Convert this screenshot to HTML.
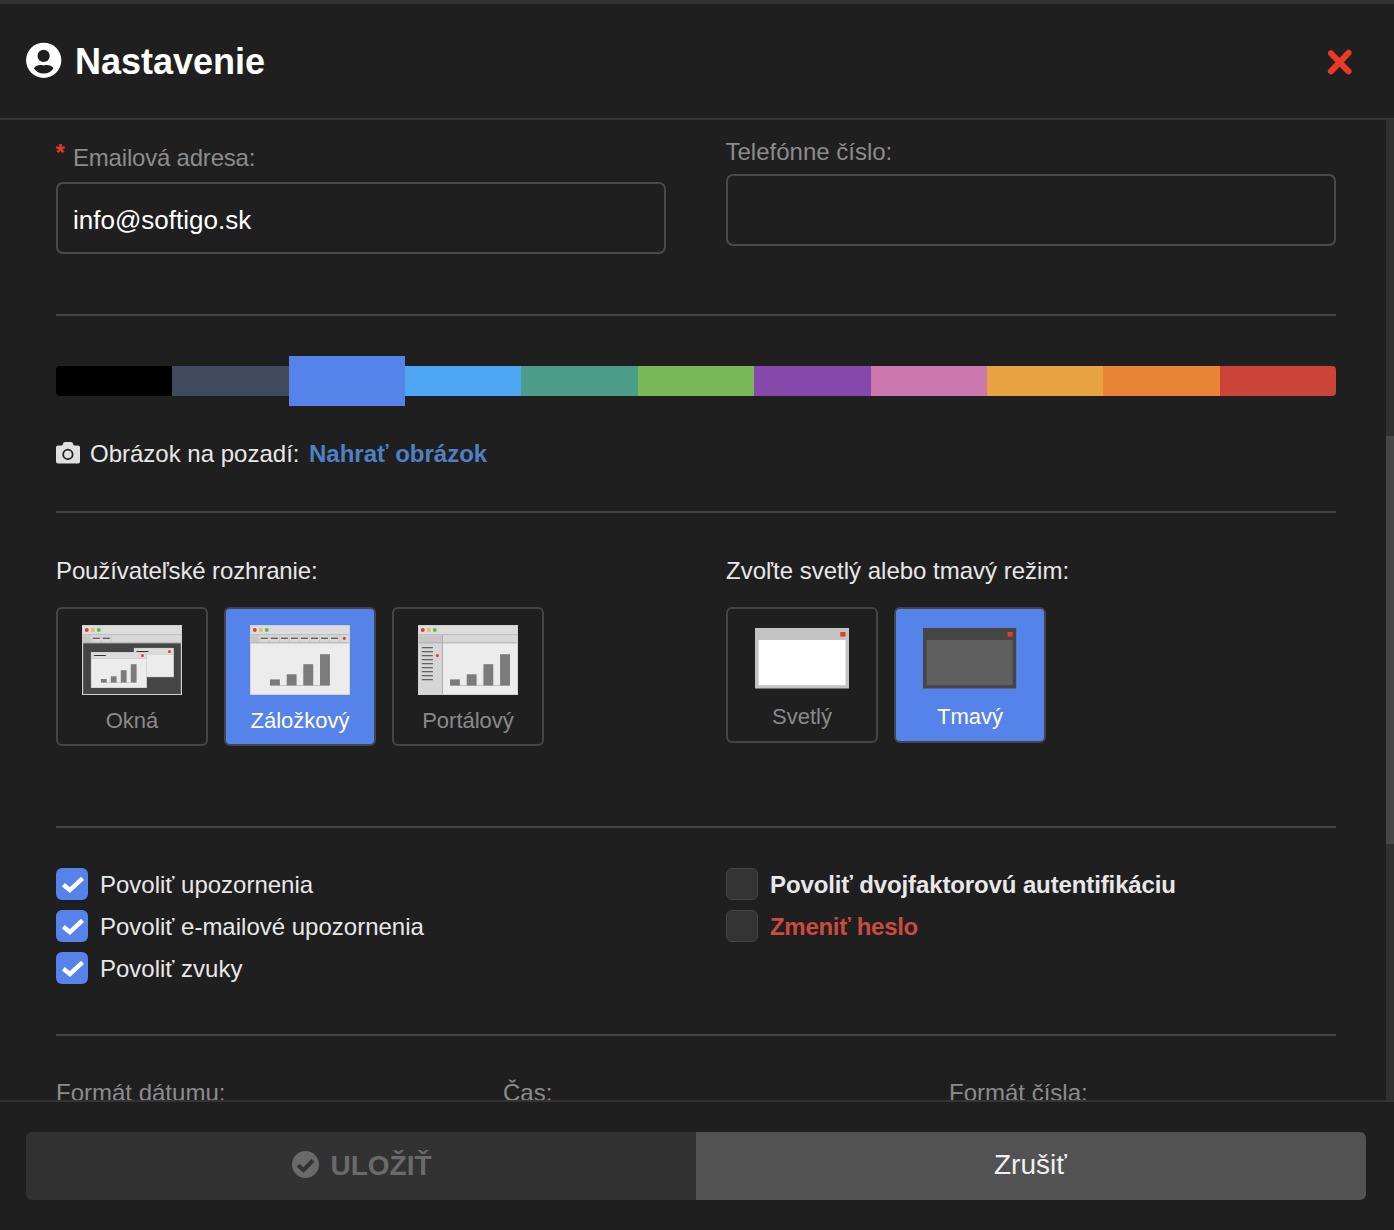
<!DOCTYPE html>
<html><head><meta charset="utf-8">
<style>
html,body{margin:0;padding:0;width:1394px;height:1230px;overflow:hidden;background:#1f1f1f;}
body{position:relative;font-family:"Liberation Sans",sans-serif;color:#e8e8e8;}
.a{position:absolute;}
.t{position:absolute;white-space:nowrap;line-height:1;}
.sep{position:absolute;left:56px;width:1280px;height:2px;background:#444;}
.inp{position:absolute;box-sizing:border-box;width:610px;height:72px;border:2px solid #4a4a4a;border-radius:7px;background:#1f1f1f;}
.tile{position:absolute;box-sizing:border-box;width:152px;border:2px solid #454545;border-radius:6px;background:#1f1f1f;}
.tile.sel{background:#5683e9;border-color:#42454c;}
.tl{position:absolute;left:0;width:148px;text-align:center;font-size:22px;line-height:22px;color:#8a8a8a;margin-top:-1px;}
.sel .tl{color:#fff;}
.cb{position:absolute;box-sizing:border-box;width:32px;height:32px;border-radius:6px;background:#5683e9;}
.cb.off{background:#333;border:1px solid #454545;}
.cbl{position:absolute;white-space:nowrap;font-size:24px;line-height:24px;color:#e8e8e8;}
</style></head><body>
<!-- top strip -->
<div class="a" style="left:0;top:0;width:1394px;height:4px;background:#323232"></div>
<!-- header -->
<svg class="a" style="left:25.7px;top:42px" width="36" height="36" viewBox="0 0 36 36">
<circle cx="17.7" cy="18.3" r="17.6" fill="#fff"/>
<circle cx="17.6" cy="13.9" r="6.1" fill="#1f1f1f"/>
<path d="M7.9 26.2 C10 23.4 13.6 22.4 17.6 23.6 C21.8 22.4 25.4 23.4 27.5 26.2 C25.5 29.8 21.8 31.5 17.7 31.5 C13.6 31.5 9.9 29.8 7.9 26.2 Z" fill="#1f1f1f"/>
</svg>
<div class="t" style="left:75px;top:43.5px;font-size:36px;font-weight:bold;color:#fff">Nastavenie</div>
<svg class="a" style="left:1324px;top:46px" width="32" height="32" viewBox="0 0 32 32">
<path d="M7 7.3 L24.5 25.3 M24.5 6.8 L7 25.3" stroke="#ea3926" stroke-width="6.1" stroke-linecap="round"/>
</svg>
<div class="a" style="left:0;top:118px;width:1394px;height:2px;background:#363636"></div>

<!-- scrollbar -->
<div class="a" style="left:1386px;top:120px;width:8px;height:980px;background:#303030"></div>
<div class="a" style="left:1386px;top:436px;width:8px;height:408px;background:#474747"></div>

<!-- email / phone -->
<div class="t" style="left:55.5px;top:140.5px;font-size:24px;font-weight:bold;color:#e8392a">*</div>
<div class="t" style="left:73px;top:145.7px;font-size:24px;letter-spacing:-0.2px;color:#8c8c8c">Emailová adresa:</div>
<div class="inp" style="left:56px;top:182px"></div>
<div class="t" style="left:73px;top:207px;font-size:26px;color:#fff">info@softigo.sk</div>
<div class="t" style="left:725.5px;top:139.7px;font-size:24px;color:#8c8c8c">Telefónne číslo:</div>
<div class="inp" style="left:726px;top:174px"></div>

<div class="sep" style="top:314px"></div>

<!-- colour bar -->
<div class="a" style="left:56px;top:366px;width:1280px;height:30px;border-radius:4px;overflow:hidden;display:flex">
<div style="flex:1;background:#000"></div>
<div style="flex:1;background:#414a5d"></div>
<div style="flex:1;background:#5683e9"></div>
<div style="flex:1;background:#4ea6f5"></div>
<div style="flex:1;background:#4b9d89"></div>
<div style="flex:1;background:#79b957"></div>
<div style="flex:1;background:#8548ab"></div>
<div style="flex:1;background:#cc77ad"></div>
<div style="flex:1;background:#e8a23f"></div>
<div style="flex:1;background:#e78534"></div>
<div style="flex:1;background:#cc4338"></div>
</div>
<div class="a" style="left:288.7px;top:356px;width:116.4px;height:50px;background:#5683e9"></div>

<!-- background image -->
<svg class="a" style="left:55px;top:441px" width="26" height="24" viewBox="0 0 26 24">
<path d="M6.5 4.4 Q8 4.4 8 2.8 Q8 1.1 10 1.1 H16 Q18 1.1 18 2.8 Q18 4.4 19.5 4.4 H23 Q25 4.4 25 6.4 V20.6 Q25 22.6 23 22.6 H3 Q1 22.6 1 20.6 V6.4 Q1 4.4 3 4.4 Z" fill="#e0e0e0"/>
<circle cx="12.9" cy="13.4" r="4.7" fill="none" stroke="#1f1f1f" stroke-width="1.8"/>
</svg>
<div class="t" style="left:90px;top:441.7px;font-size:24px;color:#e8e8e8">Obrázok na pozadí:</div>
<div class="t" style="left:309px;top:441.7px;font-size:24px;font-weight:bold;color:#5080c4">Nahrať obrázok</div>

<div class="sep" style="top:511px"></div>

<!-- UI -->
<div class="t" style="left:56px;top:558.7px;font-size:24px;letter-spacing:-0.12px;color:#e8e8e8">Používateľské rozhranie:</div>
<div class="t" style="left:726px;top:558.7px;font-size:24px;color:#e8e8e8">Zvoľte svetlý alebo tmavý režim:</div>

<div class="tile" style="left:56px;top:607px;height:139px">
<div class="tl" style="top:102px">Okná</div>
</div>
<div class="tile sel" style="left:224px;top:607px;height:139px">
<div class="tl" style="top:102px">Záložkový</div>
</div>
<div class="tile" style="left:392px;top:607px;height:139px">
<div class="tl" style="top:102px">Portálový</div>
</div>
<div class="tile" style="left:726px;top:607px;height:136px">
<div class="tl" style="top:98px">Svetlý</div>
</div>
<div class="tile sel" style="left:894px;top:607px;height:136px">
<div class="tl" style="top:98px">Tmavý</div>
</div>

<!-- ICONS -->
<svg class="a" style="left:82px;top:625px" width="100" height="70" viewBox="0 0 100 70"><rect x="0" y="0" width="100" height="70" fill="#cfcfcf"/><rect x="0.8" y="0.8" width="98.4" height="8.6" fill="#dcdcdc"/><rect x="0.8" y="9.4" width="98.4" height="0.8" fill="#b0b0b0"/><circle cx="4.8" cy="5" r="2" fill="#d9452e"/><circle cx="10.8" cy="5" r="2" fill="#efb45c"/><circle cx="16.8" cy="5" r="2" fill="#5cb85c"/><rect x="0.8" y="10.2" width="98.4" height="7.4" fill="#d8d8d8"/><rect x="0.8" y="10.2" width="7.6" height="7.4" fill="#c6c6c6"/><rect x="8.8" y="10.2" width="0.6" height="7.4" fill="#bdbdbd"/><rect x="10.8" y="12.7" width="7" height="1" fill="#333333"/><rect x="18.8" y="10.2" width="0.6" height="7.4" fill="#bdbdbd"/><rect x="20.8" y="12.7" width="7" height="1" fill="#333333"/><rect x="28.8" y="10.2" width="0.6" height="7.4" fill="#bdbdbd"/><rect x="0.8" y="17.6" width="98.4" height="0.8" fill="#9a9a9a"/><rect x="1.2" y="18.4" width="97.6" height="50.6" fill="#454545"/><rect x="51.8" y="22.9" width="40.1" height="29.3" fill="#c9c9c9"/><rect x="52.4" y="23.5" width="38.9" height="5.6" fill="#dcdcdc"/><rect x="54.5" y="26" width="12" height="1" fill="#333333"/><circle cx="87.5" cy="26.5" r="1.5" fill="#d9452e"/><rect x="52.4" y="29.7" width="38.9" height="21.9" fill="#ececec"/><rect x="8.9" y="27" width="56" height="36" fill="#c9c9c9"/><rect x="9.5" y="27.6" width="54.8" height="5.6" fill="#dcdcdc"/><rect x="11.8" y="30" width="12" height="1" fill="#333333"/><circle cx="60.5" cy="30.5" r="1.5" fill="#d9452e"/><rect x="9.5" y="33.8" width="54.8" height="28.6" fill="#ececec"/><rect x="18.9" y="54.0" width="5.8" height="3.6" fill="#7b7b7b"/><rect x="28.8" y="51.3" width="5.8" height="6.3" fill="#7b7b7b"/><rect x="38.8" y="45.2" width="5.8" height="12.4" fill="#7b7b7b"/><rect x="48.8" y="39.2" width="5.8" height="18.4" fill="#7b7b7b"/><rect x="18.9" y="57.3" width="35.8" height="0.4" fill="#9a9a9a"/></svg>
<svg class="a" style="left:250px;top:625px" width="100" height="70" viewBox="0 0 100 70"><rect x="0" y="0" width="100" height="70" fill="#cfcfcf"/><rect x="0.8" y="0.8" width="98.4" height="8.6" fill="#dcdcdc"/><rect x="0.8" y="9.4" width="98.4" height="0.8" fill="#b0b0b0"/><circle cx="4.8" cy="5" r="2" fill="#d9452e"/><circle cx="10.8" cy="5" r="2" fill="#efb45c"/><circle cx="16.8" cy="5" r="2" fill="#5cb85c"/><rect x="0.8" y="10.2" width="98.4" height="7.4" fill="#d8d8d8"/><rect x="0.8" y="10.2" width="7.6" height="7.4" fill="#c6c6c6"/><rect x="8.8" y="10.2" width="0.6" height="7.4" fill="#bdbdbd"/><rect x="10.8" y="12.7" width="7" height="1" fill="#333333"/><rect x="18.8" y="10.2" width="0.6" height="7.4" fill="#bdbdbd"/><rect x="20.8" y="12.7" width="7" height="1" fill="#333333"/><rect x="28.9" y="10.2" width="0.6" height="7.4" fill="#bdbdbd"/><rect x="30.9" y="12.7" width="7" height="1" fill="#333333"/><rect x="38.9" y="10.2" width="0.6" height="7.4" fill="#bdbdbd"/><rect x="40.9" y="12.7" width="7" height="1" fill="#333333"/><rect x="48.9" y="10.2" width="0.6" height="7.4" fill="#bdbdbd"/><rect x="50.9" y="12.7" width="7" height="1" fill="#333333"/><rect x="59.0" y="10.2" width="0.6" height="7.4" fill="#bdbdbd"/><rect x="61.0" y="12.7" width="7" height="1" fill="#333333"/><rect x="69.0" y="10.2" width="0.6" height="7.4" fill="#bdbdbd"/><rect x="71.0" y="12.7" width="7" height="1" fill="#333333"/><rect x="79.0" y="10.2" width="0.6" height="7.4" fill="#bdbdbd"/><rect x="81.0" y="12.7" width="7" height="1" fill="#333333"/><rect x="89.1" y="10.2" width="0.6" height="7.4" fill="#bdbdbd"/><circle cx="94.3" cy="13.3" r="1.6" fill="#d9452e"/><rect x="0.8" y="17.6" width="98.4" height="0.8" fill="#9a9a9a"/><rect x="0.8" y="18.4" width="98.4" height="50.8" fill="#ececec"/><rect x="20.0" y="54.4" width="9.9" height="6.2" fill="#7b7b7b"/><rect x="36.7" y="49.3" width="9.9" height="11.3" fill="#7b7b7b"/><rect x="53.3" y="39.2" width="9.9" height="21.4" fill="#7b7b7b"/><rect x="70.0" y="29.2" width="9.9" height="31.4" fill="#7b7b7b"/><rect x="20" y="60.2" width="60" height="0.5" fill="#9a9a9a"/></svg>
<svg class="a" style="left:418px;top:625px" width="100" height="70" viewBox="0 0 100 70"><rect x="0" y="0" width="100" height="70" fill="#cfcfcf"/><rect x="0.8" y="0.8" width="98.4" height="8.6" fill="#dcdcdc"/><rect x="0.8" y="9.4" width="98.4" height="0.8" fill="#b0b0b0"/><circle cx="4.8" cy="5" r="2" fill="#d9452e"/><circle cx="10.8" cy="5" r="2" fill="#efb45c"/><circle cx="16.8" cy="5" r="2" fill="#5cb85c"/><rect x="0.8" y="10.2" width="98.4" height="7.4" fill="#d8d8d8"/><rect x="0.8" y="10.2" width="23.7" height="7.4" fill="#c6c6c6"/><rect x="0.8" y="17.6" width="98.4" height="0.8" fill="#9a9a9a"/><rect x="0.8" y="18.4" width="23.7" height="50.8" fill="#d6d6d6"/><rect x="24.1" y="10.2" width="0.9" height="59" fill="#a8a8a8"/><rect x="25" y="18.4" width="74.2" height="50.8" fill="#ececec"/><rect x="3.7" y="22.3" width="11.2" height="0.9" fill="#333333"/><rect x="3.7" y="26.3" width="11.2" height="0.9" fill="#333333"/><rect x="3.7" y="30.3" width="11.2" height="0.9" fill="#333333"/><rect x="3.7" y="34.3" width="11.2" height="0.9" fill="#333333"/><rect x="3.7" y="38.3" width="11.2" height="0.9" fill="#333333"/><rect x="3.7" y="42.3" width="11.2" height="0.9" fill="#333333"/><rect x="3.7" y="46.3" width="11.2" height="0.9" fill="#333333"/><rect x="3.7" y="50.3" width="11.2" height="0.9" fill="#333333"/><rect x="3.7" y="54.3" width="11.2" height="0.9" fill="#333333"/><circle cx="19.4" cy="30.6" r="1.6" fill="#d9452e"/><rect x="32.0" y="54.4" width="9.9" height="6.2" fill="#7b7b7b"/><rect x="48.7" y="49.3" width="9.9" height="11.3" fill="#7b7b7b"/><rect x="65.4" y="39.2" width="9.9" height="21.4" fill="#7b7b7b"/><rect x="82.1" y="29.2" width="9.9" height="31.4" fill="#7b7b7b"/><rect x="32" y="60.2" width="60" height="0.5" fill="#9a9a9a"/></svg>
<svg class="a" style="left:755px;top:628px" width="94" height="61" viewBox="0 0 94 61"><rect x="0" y="0" width="94" height="60.5" fill="#c3c3c3"/><rect x="3.6" y="12" width="86.9" height="45.2" fill="#ffffff"/><rect x="85.3" y="4" width="5.2" height="4.6" fill="#e2401f"/></svg>
<svg class="a" style="left:923.3px;top:628px" width="94" height="61" viewBox="0 0 94 61"><rect x="0" y="0" width="93.2" height="60.5" fill="#454545"/><rect x="3.6" y="12" width="86" height="45.2" fill="#5f5f5f"/><rect x="84.5" y="4" width="5.2" height="4.6" fill="#e2401f"/></svg>
<!-- /ICONS -->

<div class="sep" style="top:826px"></div>

<!-- checkboxes -->
<div class="cb" style="left:56px;top:868px"><svg width="32" height="32" viewBox="0 0 32 32"><path d="M7.3 16.8 L13.8 22 L26.5 10.3" fill="none" stroke="#fff" stroke-width="4.4"/></svg></div>
<div class="cbl" style="left:100px;top:872.7px">Povoliť upozornenia</div>
<div class="cb" style="left:56px;top:910px"><svg width="32" height="32" viewBox="0 0 32 32"><path d="M7.3 16.8 L13.8 22 L26.5 10.3" fill="none" stroke="#fff" stroke-width="4.4"/></svg></div>
<div class="cbl" style="left:100px;top:914.7px">Povoliť e-mailové upozornenia</div>
<div class="cb" style="left:56px;top:952px"><svg width="32" height="32" viewBox="0 0 32 32"><path d="M7.3 16.8 L13.8 22 L26.5 10.3" fill="none" stroke="#fff" stroke-width="4.4"/></svg></div>
<div class="cbl" style="left:100px;top:956.7px">Povoliť zvuky</div>

<div class="cb off" style="left:726px;top:868px"></div>
<div class="cbl" style="left:770px;top:872.7px;font-weight:bold;letter-spacing:-0.12px">Povoliť dvojfaktorovú autentifikáciu</div>
<div class="cb off" style="left:726px;top:910px"></div>
<div class="cbl" style="left:770px;top:914.7px;font-weight:bold;letter-spacing:-0.3px;color:#cc4b3f">Zmeniť heslo</div>

<div class="sep" style="top:1034px"></div>

<!-- clipped bottom labels -->
<div class="a" style="left:0;top:1060px;width:1386px;height:40px;overflow:hidden">
<div class="t" style="left:56px;top:21px;font-size:24px;color:#8c8c8c">Formát dátumu:</div>
<div class="t" style="left:503px;top:21px;font-size:24px;color:#8c8c8c">Čas:</div>
<div class="t" style="left:949px;top:21px;font-size:24px;color:#8c8c8c">Formát čísla:</div>
</div>

<!-- footer -->
<div class="a" style="left:0;top:1100px;width:1394px;height:2px;background:#333"></div>
<div class="a" style="left:26px;top:1132px;width:1340px;height:68px;border-radius:6px;overflow:hidden">
<div class="a" style="left:0;top:0;width:670px;height:68px;background:#323232"></div>
<div class="a" style="left:670px;top:0;width:670px;height:68px;background:#525252"></div>
</div>
<svg class="a" style="left:291px;top:1150px" width="29" height="29" viewBox="0 0 29 29">
<circle cx="14.5" cy="14.5" r="13.5" fill="#6a6a6a"/>
<path d="M7 15.2 L12.5 20 L22 10.5" fill="none" stroke="#323232" stroke-width="4"/>
</svg>
<div class="t" style="left:330.5px;top:1151.8px;font-size:28px;font-weight:bold;color:#6a6a6a">ULOŽIŤ</div>
<div class="t" style="left:994px;top:1151.3px;font-size:28px;color:#f0f0f0">Zrušiť</div>
</body></html>
